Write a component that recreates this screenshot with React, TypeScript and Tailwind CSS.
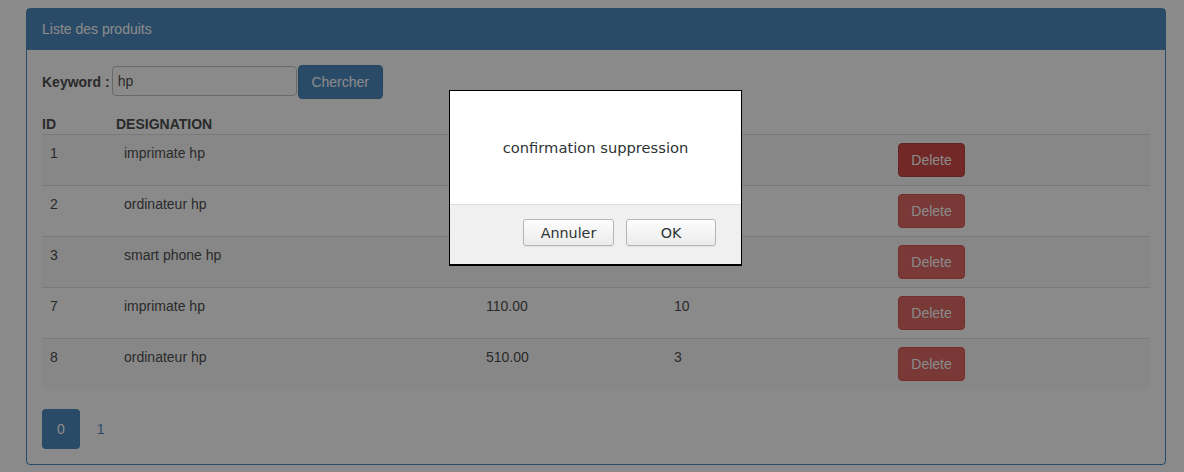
import * as React from "react";

type Produit = {
  id: number;
  designation: string;
  prix: string;
  quantite: number;
};

const PRODUITS: Produit[] = [
  { id: 1, designation: "imprimate hp", prix: "900.00", quantite: 5 },
  { id: 2, designation: "ordinateur hp", prix: "6000.00", quantite: 4 },
  { id: 3, designation: "smart phone hp", prix: "4300.00", quantite: 8 },
  { id: 7, designation: "imprimate hp", prix: "110.00", quantite: 10 },
  { id: 8, designation: "ordinateur hp", prix: "510.00", quantite: 3 },
];

const PAGES = [0, 1];

export default function App() {
  const [keyword, setKeyword] = React.useState("hp");
  const [page, setPage] = React.useState(0);

  return (
    <div className="relative h-[472px] overflow-hidden bg-white font-['Liberation_Sans',Arial,sans-serif] text-[14px] leading-[20px] text-[#333]">
      <div className="ml-[26px] mt-[8px] w-[1140px] rounded-[4px] border border-[#337ab7]">
        <div className="border-b border-[#337ab7] bg-[#337ab7] px-[15px] py-[10px] text-white">
          Liste des produits
        </div>

        <div className="p-[15px]">
          <form className="flex items-start" onSubmit={(e) => e.preventDefault()}>
            <label className="mt-[7px] mr-[2px] font-bold">Keyword :</label>
            <input
              value={keyword}
              onChange={(e) => setKeyword(e.target.value)}
              className="mt-[1px] h-[30px] w-[185px] rounded-[4px] border border-[#b8b8b8] bg-white px-[5px] outline-none"
            />
            <button
              type="submit"
              className="ml-[1px] h-[34px] w-[85px] rounded-[4px] border border-[#2e6da4] bg-[#337ab7] text-white"
            >
              Chercher
            </button>
          </form>

          <table className="mt-[15px] w-full table-fixed border-collapse">
            <colgroup>
              <col className="w-[74px]" />
              <col className="w-[362px]" />
              <col className="w-[188px]" />
              <col className="w-[224px]" />
              <col />
            </colgroup>
            <thead>
              <tr className="text-left">
                <th className="p-0 font-bold">ID</th>
                <th className="p-0 font-bold">DESIGNATION</th>
                <th className="p-0 font-bold">PRIX</th>
                <th className="p-0 font-bold">QUANTITE</th>
                <th className="p-0" />
              </tr>
            </thead>
            <tbody>
              {PRODUITS.map((p, i) => (
                <tr key={p.id} className={i % 2 === 0 ? "bg-[#f9f9f9]" : ""}>
                  <td className="border-t border-[#ddd] p-[8px] align-top">{p.id}</td>
                  <td className="border-t border-[#ddd] p-[8px] align-top">{p.designation}</td>
                  <td className="border-t border-[#ddd] p-[8px] align-top">{p.prix}</td>
                  <td className="border-t border-[#ddd] p-[8px] align-top">{p.quantite}</td>
                  <td className="border-t border-[#ddd] p-[8px] align-top">
                    <button
                      className={
                        i === 0
                          ? "h-[34px] w-[67px] rounded-[4px] border border-[#ac2925] bg-[#c9302c] text-white"
                          : "h-[34px] w-[67px] rounded-[4px] border border-[#d43f3a] bg-[#d9534f] text-white"
                      }
                    >
                      Delete
                    </button>
                  </td>
                </tr>
              ))}
            </tbody>
          </table>

          <ul className="mt-[20px] flex">
            {PAGES.map((n) => (
              <li key={n} className={n > 0 ? "ml-[2px]" : ""}>
                <a
                  onClick={() => setPage(n)}
                  className={
                    n === page
                      ? "block rounded-[4px] bg-[#337ab7] px-[15px] py-[10px] text-white"
                      : "block rounded-[4px] px-[15px] py-[10px] text-[#337ab7]"
                  }
                >
                  {n}
                </a>
              </li>
            ))}
          </ul>
        </div>
      </div>

      {/* modal backdrop + native confirm */}
      <div className="absolute inset-0 bg-[rgba(34,34,34,0.53)]" />
      <div className="absolute left-[449px] top-[90px] flex h-[176px] w-[293px] flex-col border border-b-2 border-black bg-white font-['DejaVu_Sans',sans-serif] text-[#2e3436]">
        <div className="flex h-[113px] items-center justify-center text-[14.7px]">confirmation suppression</div>
        <div className="flex flex-1 justify-end gap-[12px] border-t border-[#dcdcdc] bg-[#f0f0f0] pr-[25px] pt-[14px] text-[14.3px]">
          <button className="h-[27px] w-[91px] rounded-[3px] border border-[#b6b6b6] bg-gradient-to-b from-[#fdfdfd] to-[#ebebeb] shadow-[0_1px_0_rgba(0,0,0,0.05)]">
            Annuler
          </button>
          <button className="h-[27px] w-[90px] rounded-[3px] border border-[#b6b6b6] bg-gradient-to-b from-[#fdfdfd] to-[#ebebeb] shadow-[0_1px_0_rgba(0,0,0,0.05)]">
            OK
          </button>
        </div>
      </div>
    </div>
  );
}
